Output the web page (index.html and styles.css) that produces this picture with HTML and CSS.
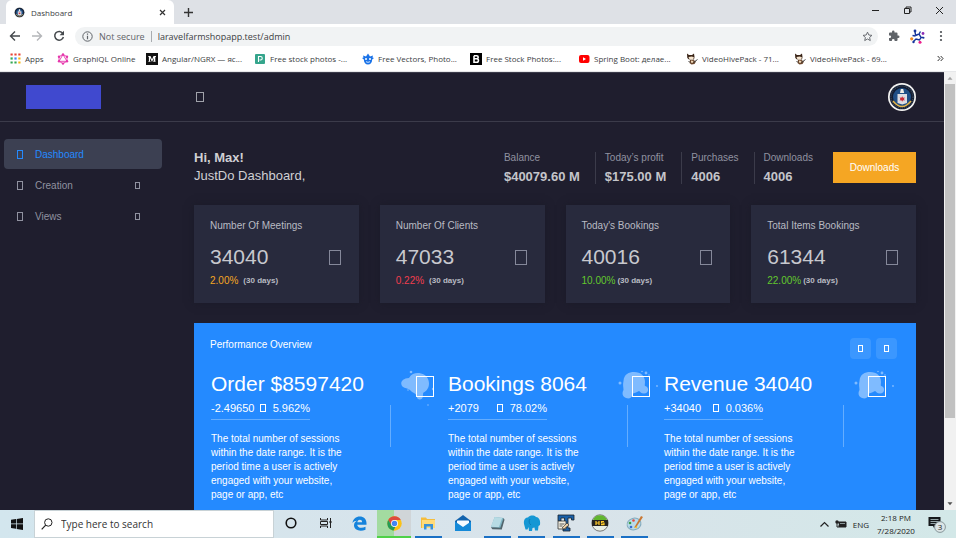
FILE: index.html
```html
<!DOCTYPE html>
<html lang="en">
<head>
<meta charset="utf-8">
<title>Dashboard</title>
<link rel="stylesheet" href="styles.css">
</head>
<body>
<svg class="defs" aria-hidden="true">
  <symbol id="seal" viewBox="0 0 28 28">
    <circle cx="14" cy="14" r="14" fill="#f4f4f2"/>
    <circle cx="14" cy="14" r="12.3" fill="#101c33"/>
    <circle cx="14" cy="14" r="11" fill="none" stroke="#49525c" stroke-width="1.2" stroke-dasharray="1 1"/>
    <circle cx="14" cy="14" r="9" fill="#1f4f86"/>
    <path d="M5 18Q14 29 23 18" fill="none" stroke="#e3b64d" stroke-width="1.6"/>
    <path d="M12 10l.800-4h2.400l1 4z" fill="#f1eee6"/>
    <path d="M9.500 11h9.500v9l-4.700 1.500-4.800-1.500z" fill="#dcdde2"/>
    <path d="M14.200 13.200l.800 1.600 1.800-.400-.800 1.600.800 1.600-1.800-.400-.800 1.600-.800-1.600-1.800.400.800-1.600-.800-1.600 1.800.400z" fill="#c92a36"/>
  </symbol>
  <symbol id="wolf" viewBox="0 0 12 12">
    <path d="M1 .500l2 1.500h3L8 .500 8.500 4 8 6.500H3L1.300 5z" fill="#3a2417"/>
    <path d="M2.500 4L6 3.500 8 4.500 7 6.500H3.500z" fill="#f6e5cf"/>
    <path d="M4 7l3.500 0L10 8.500l-1.500 2.500-3 .500L3.500 10z" fill="#6b452a"/>
    <path d="M5 7.500l2.500.500-1 2-1.500-.500z" fill="#f0d9b8"/>
    <path d="M7.500 9.500l4-3M2.500 8l1.500 1.500" stroke="#444" stroke-width="1"/>
  </symbol>
  <symbol id="splash-a" viewBox="0 0 34 38">
    <path fill="#fff" opacity=".42" d="M9 8C12 3 17 2.500 21 3.500c5 1 8 5 8 10 0 5-3 8-6 9.500.5 1-.200 2-.200 3.500 0 4-6 4-6 0 0-1-.500-2-2.800-3.500C11 22 10 19 7 18.500c-8-1-8-10 2-10.500z"/>
    <g fill="#fff" opacity=".42"><circle cx="11" cy="2" r="1.300"/><circle cx="8" cy="20" r=".8"/><circle cx="33" cy="19" r="1.200"/><circle cx="28" cy="35" r=".8"/></g>
  </symbol>
  <symbol id="splash-b" viewBox="0 0 40 32">
    <path fill="#fff" opacity=".42" d="M5.500 11C6 4 11 2 16 2c7 0 11 4 11 10 0 2-.500 3 0 4 4.500 1 4 7.500-1 7.500-3 0-4-2-5-2.500-2 1-4 2-6 2.500-1 5-4 5.500-7 4.500-4-1.500-4-5.500-2.500-8 0-3-1-5 0-9z"/>
    <g fill="#fff" opacity=".42"><circle cx="2" cy="13" r="1.500"/><circle cx="28" cy="3" r="1.400"/><circle cx="24" cy="1.500" r=".8"/><circle cx="39" cy="16" r=".9"/><circle cx="31" cy="5" r=".8"/></g>
  </symbol>
</svg>

<header class="browser">
  <div class="tabs">
    <div class="tab">
      <svg class="i11" viewBox="0 0 28 28"><use href="#seal"/></svg>
      <span class="tab-title">Dashboard</span>
      <button class="plain" aria-label="Close tab"><svg class="i7" viewBox="0 0 7 7"><path d="M1 1l5 5M6 1L1 6" stroke="#333" stroke-width="1.200"/></svg></button>
    </div>
    <button class="plain new-tab" aria-label="New tab"><svg class="i9" viewBox="0 0 9 9"><path d="M4.500 0v9M0 4.500h9" stroke="#333" stroke-width="1.400"/></svg></button>
    <div class="window-buttons">
      <button class="plain" aria-label="Minimize"><svg class="i9" viewBox="0 0 9 9"><path d="M1 4.500h7" stroke="#222"/></svg></button>
      <button class="plain" aria-label="Restore"><svg class="i9" viewBox="0 0 9 9"><path d="M1.500 2.500h5v5h-5zM3 2.500V1h5v5H6.500" fill="none" stroke="#222"/></svg></button>
      <button class="plain" aria-label="Close"><svg class="i9" viewBox="0 0 9 9"><path d="M1 1l7 7M8 1L1 8" stroke="#222"/></svg></button>
    </div>
  </div>
  <div class="toolbar">
    <button class="plain" aria-label="Back"><svg class="i12" viewBox="0 0 12 12"><path d="M11 6H1.500M6 1.500L1.500 6 6 10.500" fill="none" stroke="#45494d" stroke-width="1.400"/></svg></button>
    <button class="plain" aria-label="Forward"><svg class="i12" viewBox="0 0 12 12"><path d="M1 6h9.500M6 1.500L10.500 6 6 10.500" fill="none" stroke="#b4b6b9" stroke-width="1.400"/></svg></button>
    <button class="plain" aria-label="Reload"><svg class="i12" viewBox="0 0 12 12"><path d="M9.800 3.300A4.400 4.400 0 1 0 10.400 7" fill="none" stroke="#45494d" stroke-width="1.500"/><path d="M11 .800v4.400H6.600z" fill="#45494d"/></svg></button>
    <div class="omnibox">
      <svg class="i11" viewBox="0 0 11 11"><circle cx="5.500" cy="5.500" r="4.700" fill="none" stroke="#5f6368"/><path d="M5.500 4.800v3.400M5.500 2.600v1.200" stroke="#5f6368" stroke-width="1.200"/></svg>
      <label class="secure" for="url">Not secure</label>
      <input id="url" type="text" value="laravelfarmshopapp.test/admin">
      <button class="plain" aria-label="Bookmark"><svg class="i11" viewBox="0 0 24 24"><path d="M12 2.500l2.900 6.300 6.800.700-5.100 4.600 1.500 6.800-6.100-3.500-6.100 3.500 1.500-6.800L2.300 9.500l6.800-.700z" fill="none" stroke="#5f6368" stroke-width="2"/></svg></button>
    </div>
    <button class="plain" aria-label="Extensions"><svg class="i12" viewBox="0 0 24 24"><path d="M20.500 11H19V7a2 2 0 0 0-2-2h-4V3.500a2.500 2.500 0 0 0-5 0V5H4a2 2 0 0 0-2 2v3.800h1.500a2.700 2.700 0 0 1 0 5.400H2V20a2 2 0 0 0 2 2h3.800v-1.500a2.700 2.700 0 0 1 5.400 0V22H17a2 2 0 0 0 2-2v-4h1.500a2.500 2.500 0 0 0 0-5z" fill="#5f6368"/></svg></button>
    <button class="plain" aria-label="Profile"><svg class="i15" viewBox="0 0 15 15"><g fill="none" stroke="#17359c" stroke-width="1.400"><path d="M5 2.500l.500 3.500M2.500 6.500l3 .500M5.500 6.500L9 5l2 3.500-1.500 2.500-3.500-1L3.500 12.500M9 5l1.500-2.500M11 8.500h2"/></g><g fill="#17359c"><circle cx="5" cy="2" r="1.400"/><circle cx="3.500" cy="13" r="1.200"/><circle cx="13.500" cy="8.800" r="1"/></g><circle cx="1.700" cy="9.800" r="1.600" fill="#f08a24"/><circle cx="13" cy="4.500" r="1.400" fill="#8a2db5"/><circle cx="10" cy="13.200" r="1.500" fill="#ec1e8c"/></svg></button>
    <button class="plain" aria-label="Menu"><svg class="i12" viewBox="0 0 12 12"><g fill="#4b4f53"><circle cx="6" cy="2" r="1.100"/><circle cx="6" cy="6" r="1.100"/><circle cx="6" cy="10" r="1.100"/></g></svg></button>
  </div>
  <nav class="bookmarks">
    <a href="#" class="bm bm-apps"><svg class="i11" viewBox="0 0 11 11"><path d="M.500 1.500h2.200M4.400 1.500h2.200M8.300 1.500h2.200" stroke="#e94335" stroke-width="2.200"/><path d="M.500 5.500h2.200" stroke="#34a853" stroke-width="2.200"/><path d="M4.400 5.500h2.200" stroke="#4285f4" stroke-width="2.200"/><path d="M8.300 5.500h2.200M8.300 9.500h2.200" stroke="#f6b50c" stroke-width="2.200"/><path d="M.500 9.500h2.200M4.400 9.500h2.200" stroke="#34a853" stroke-width="2.200"/></svg>Apps</a>
    <a href="#" class="bm bm-graph"><svg class="i12" viewBox="0 0 12 12"><path d="M6 1.500l4 2.200v4.600L6 10.500 2 8.300V3.700zM6 1.500L2 8.300h8z" fill="none" stroke="#e535ab" stroke-width=".9"/><g fill="#e535ab"><circle cx="6" cy="1.400" r="1.200"/><circle cx="10" cy="3.700" r="1.200"/><circle cx="10" cy="8.300" r="1.200"/><circle cx="6" cy="10.600" r="1.200"/><circle cx="2" cy="8.300" r="1.200"/><circle cx="2" cy="3.700" r="1.200"/></g></svg>GraphiQL Online</a>
    <a href="#" class="bm"><svg class="i12" viewBox="0 0 12 12"><path d="M0 0h12v12H0z" fill="#111"/><path d="M2 3h2.500L6 6.500 7.500 3H10v.700l-.700.500v4l.700.600H6.900l.800-.700V4.900L6 9 4 4.900v3l.900.900H2l.900-.900V4.300z" fill="#fff"/></svg>Angular/NGRX — яс...</a>
    <a href="#" class="bm"><svg class="i12" viewBox="0 0 12 12"><rect x="1" y="1" width="10" height="10" rx="1" fill="#35a58c"/><path d="M4.500 9V3.500h2a1.700 1.700 0 0 1 0 3.500h-1" fill="none" stroke="#fff" stroke-width="1.100"/></svg>Free stock photos -...</a>
    <a href="#" class="bm"><svg class="i12" viewBox="0 0 12 12"><path d="M1 2.500l3 1L6 .500l2 3 3-1-.500 2 1.500.500-1.800 1.500C10 10 8.500 11.500 6 11.500S2 10 1.800 6.500L0 5l1.500-.500z" fill="#1a73e8"/><circle cx="4" cy="6" r="1" fill="#fff"/><circle cx="8" cy="6" r="1" fill="#fff"/><path d="M4 8.700q2 1.300 4 0" stroke="#fff" fill="none" stroke-width=".8"/></svg>Free Vectors, Photo...</a>
    <a href="#" class="bm"><svg class="i12" viewBox="0 0 12 12"><path d="M0 0h12v12H0z" fill="#000"/><path d="M4 2.700h2.700a1.500 1.500 0 0 1 0 3H4m2.700 0a1.700 1.700 0 0 1 0 3.500H4V2.700" fill="none" stroke="#fff" stroke-width="1.600"/></svg>Free Stock Photos:...</a>
    <a href="#" class="bm"><svg class="i12" viewBox="0 0 12 12"><rect x="1" y="2" width="10.500" height="8" rx="2" fill="#f00"/><path d="M5 4.300v3.400L8 6z" fill="#fff"/></svg>Spring Boot: делае...</a>
    <a href="#" class="bm"><svg class="i12" viewBox="0 0 12 12"><use href="#wolf"/></svg>VideoHivePack - 71...</a>
    <a href="#" class="bm"><svg class="i12" viewBox="0 0 12 12"><use href="#wolf"/></svg>VideoHivePack - 69...</a>
    <button class="plain more" aria-label="More bookmarks"><svg class="i7" viewBox="0 0 7 7"><path d="M.700 1l2.300 2.500L.700 6M3.700 1L6 3.500 3.700 6" fill="none" stroke="#333"/></svg></button>
  </nav>
</header>

<div class="viewport">
  <div class="app">
    <header class="app-header">
      <a href="#" class="brand" aria-label="Home"></a>
      <button class="plain toggle" aria-label="Toggle sidebar"><span class="box box-m"></span></button>
      <svg class="avatar" viewBox="0 0 28 28"><use href="#seal"/></svg>
    </header>
    <div class="app-body">
      <nav class="sidebar">
        <a href="#" class="side-link active"><span class="box box-s"></span>Dashboard</a>
        <a href="#" class="side-link"><span class="box box-s"></span>Creation<span class="box box-xs caret"></span></a>
        <a href="#" class="side-link"><span class="box box-s"></span>Views<span class="box box-xs caret"></span></a>
      </nav>
      <main class="main">
        <section class="welcome">
          <div class="hello"><h1>Hi, Max!</h1><p>JustDo Dashboard,</p></div>
          <dl class="stats">
            <div><dt>Balance</dt><dd>$40079.60 M</dd></div>
            <div><dt>Today’s profit</dt><dd>$175.00 M</dd></div>
            <div><dt>Purchases</dt><dd>4006</dd></div>
            <div><dt>Downloads</dt><dd>4006</dd></div>
          </dl>
          <button class="download">Downloads</button>
        </section>
        <section class="cards">
          <article class="card"><h2>Number Of Meetings</h2><div class="figure">34040<span class="box box-l"></span></div><p><span class="pct orange">2.00%</span><b>(30 days)</b></p></article>
          <article class="card"><h2>Number Of Clients</h2><div class="figure">47033<span class="box box-l"></span></div><p><span class="pct red">0.22%</span><b>(30 days)</b></p></article>
          <article class="card"><h2>Today's Bookings</h2><div class="figure">40016<span class="box box-l"></span></div><p><span class="pct green">10.00%</span><b>(30 days)</b></p></article>
          <article class="card"><h2>Total Items Bookings</h2><div class="figure">61344<span class="box box-l"></span></div><p><span class="pct green">22.00%</span><b>(30 days)</b></p></article>
        </section>
        <section class="overview">
          <div class="overview-head">
            <h2>Performance Overview</h2>
            <button class="nav-btn" aria-label="Previous"><span class="box box-xs"></span></button>
            <button class="nav-btn" aria-label="Next"><span class="box box-xs"></span></button>
          </div>
          <div class="slides">
            <article class="slide">
              <div class="slide-head"><h3>Order $8597420</h3><span class="badge"><svg class="splash-a" viewBox="0 0 34 38"><use href="#splash-a"/></svg><span class="box box-xl"></span></span></div>
              <div class="slide-body">
                <div class="detail"><div class="change"><span>-2.49650</span><span class="rate"><span class="box box-t"></span>5.962%</span></div>
                <p>The total number of sessions within the date range. It is the period time a user is actively engaged with your website, page or app, etc</p></div>
                <span class="divider"></span>
              </div>
            </article>
            <article class="slide">
              <div class="slide-head"><h3>Bookings 8064</h3><span class="badge"><svg class="splash-b" viewBox="0 0 40 32"><use href="#splash-b"/></svg><span class="box box-xl"></span></span></div>
              <div class="slide-body">
                <div class="detail"><div class="change"><span>+2079</span><span class="rate"><span class="box box-t"></span>78.02%</span></div>
                <p>The total number of sessions within the date range. It is the period time a user is actively engaged with your website, page or app, etc</p></div>
                <span class="divider"></span>
              </div>
            </article>
            <article class="slide">
              <div class="slide-head"><h3>Revenue 34040</h3><span class="badge"><svg class="splash-b" viewBox="0 0 40 32"><use href="#splash-b"/></svg><span class="box box-xl"></span></span></div>
              <div class="slide-body">
                <div class="detail"><div class="change"><span>+34040</span><span class="rate"><span class="box box-t"></span>0.036%</span></div>
                <p>The total number of sessions within the date range. It is the period time a user is actively engaged with your website, page or app, etc</p></div>
                <span class="divider"></span>
              </div>
            </article>
          </div>
        </section>
      </main>
    </div>
  </div>
  <div class="scrollbar">
    <svg class="arrow" viewBox="0 0 12 12"><path d="M3 8L6 4.500 9 8z" fill="#a3a3a3"/></svg>
    <span class="thumb"></span><span class="rest"></span>
    <svg class="arrow" viewBox="0 0 12 12"><path d="M3 4h6L6 7.500z" fill="#505050"/></svg>
  </div>
</div>

<footer class="taskbar">
  <button class="start" aria-label="Start"><svg class="i12" viewBox="0 0 12 12"><path d="M0 1.800l5-.700v4.500H0zM5.700 1L12 0v5.600H5.700zM0 6.300h5v4.500l-5-.700zM5.700 6.300H12V12l-6.300-1z" fill="#111"/></svg></button>
  <div class="search">
    <svg class="i12" viewBox="0 0 12 12"><circle cx="7.300" cy="4.500" r="3.700" fill="none" stroke="#222"/><path d="M4.700 7.200L.700 11.300" stroke="#222" stroke-width="1.200"/></svg>
    <input type="text" aria-label="Search" placeholder="Type here to search">
  </div>
  <div class="tasks">
    <button class="task" aria-label="Cortana"><svg class="i12" viewBox="0 0 12 12"><circle cx="6" cy="6" r="4.800" fill="none" stroke="#111" stroke-width="1.600"/></svg></button>
    <button class="task" aria-label="Task view"><svg class="i12" viewBox="0 0 12 12"><path d="M.500 1v2h7V1M.500 11V9h7v2M.500 4.500h7v3h-7zM10.500 1v10" fill="none" stroke="#222"/><path d="M9.500 4h2v2h-2z" fill="#222"/></svg></button>
    <button class="task" aria-label="Edge"><svg class="i15" viewBox="0 0 15 15"><path d="M.500 7C1 3 4 .500 7.700.500c4 0 6.800 2.700 6.800 6.800v1.500H5.200c.300 3.500 5 3.800 8.300 1.900v3C8 16 2 14.200 2 9.300 2 7 3.300 5.500 5 4.700 3 4.800 1.500 5.500.500 7zm4.800-.700h4.800c0-3.300-4.300-3.200-4.800 0z" fill="#1583dc" fill-rule="evenodd"/></svg></button>
    <button class="task current" aria-label="Chrome"><svg class="i15" viewBox="0 0 16 16"><circle cx="8" cy="8" r="7.700" fill="#fbc116"/><path d="M1.300 4.200A7.700 7.700 0 0 1 14.700 4.300H8L4.800 10z" fill="#dd4b3e"/><path d="M1.300 4.200L5 10l4 1.500-2.200 4.100A7.700 7.700 0 0 1 1.300 4.200z" fill="#249b57"/><circle cx="8" cy="8" r="3.700" fill="#fff"/><circle cx="8" cy="8" r="2.900" fill="#4285f4"/></svg></button>
    <button class="task open" aria-label="File Explorer"><svg class="i15" viewBox="0 0 15 15"><path d="M0 1.500h5l1 1.500h8v9H0z" fill="#f5bd3d"/><path d="M1 4h13v8H1z" fill="#ffdb7a"/><path d="M3 13.500V8h9v5.500H9.500v-3h-4v3z" fill="#3a91d7"/></svg></button>
    <button class="task" aria-label="Mail"><svg class="i18" viewBox="0 0 18 18"><path d="M1 7l8-6 8 6v10H1z" fill="#1263ad"/><path d="M3 7h12v4l-6 4-6-4z" fill="#f6fbff"/><path d="M1 7.500l8 5.500 8-5.500V17H1z" fill="#1489d8"/><path d="M3 6.500h12L9 11.500z" fill="#f6fbff"/></svg></button>
    <button class="task open" aria-label="Notepad"><svg class="i15" viewBox="0 0 16 16"><path d="M5 1l9.500 1-2 12L1 12z" fill="#7fb5c4"/><path d="M5 1l8 1-3.500 10L1 11.500z" fill="#b7dbe4"/><path d="M14.500 2l1 2-3 10.500-10-.500-1.500-2 10 .500z" fill="#52656d"/></svg></button>
    <button class="task open" aria-label="pgAdmin"><svg class="i18" viewBox="0 0 18 18"><path d="M1 10C.500 6 2 3.500 5 3.500 7 1 11 1 13 3c4 .500 4.500 5 4 8l-1.500 1L15 16.500h-3l-.500-3-2 .500-.500 3H6l-.500-4-1 2.500H2.500z" fill="#1597d4"/><path d="M7 5c-1.500 2-1 4.500 1 6" fill="none" stroke="#0873ad" stroke-width=".8"/></svg></button>
    <button class="task open" aria-label="Text tool"><svg class="i18" viewBox="0 0 18 18"><path d="M1 1h16v5h-2.500V4H11v10h2v3H6v-3h1.500V4H4v3H1z" fill="#1960a9" stroke="#17222c" stroke-width=".8"/><path d="M1 7h8v8H1z" fill="#f1ede0" stroke="#333" stroke-width=".8"/><path d="M2.500 10h5M2.500 12h3" stroke="#333" stroke-width=".8"/><path d="M5 14l5-5 2 2-5 4z" fill="#eccfa5" stroke="#222" stroke-width=".6"/></svg></button>
    <button class="task open" aria-label="HeidiSQL"><svg class="i18" viewBox="0 0 18 18"><circle cx="9" cy="9" r="8.200" fill="#e8eee5" stroke="#777"/><path d="M2 6a7.500 7.500 0 0 1 14 0z" fill="#61b62f"/><path d="M1 6h16v6H1z" fill="#252420"/><path d="M5 7v4M8 7v4M5 9h3M13 7.500h-2.500V9H13v1.600h-3" fill="none" stroke="#ffc928" stroke-width="1.200"/></svg></button>
    <button class="task open" aria-label="Paint"><svg class="i18" viewBox="0 0 18 18"><ellipse cx="8" cy="10" rx="7" ry="5.800" fill="#b8dbe9" stroke="#83aabd" transform="rotate(-15 8 10)"/><circle cx="4" cy="9" r="1.300" fill="#3b9e45"/><circle cx="7.500" cy="6.500" r="1.300" fill="#e34a3f"/><circle cx="5" cy="13" r="1.300" fill="#356bd0"/><circle cx="10" cy="13" r="1.300" fill="#f1c33a"/><path d="M8 14l7-12 2 1-6 9z" fill="#c97834"/></svg></button>
  </div>
  <div class="tray">
    <svg class="i9" viewBox="0 0 9 9"><path d="M.500 6.500l4-4 4 4" fill="none" stroke="#222" stroke-width="1.200"/></svg>
    <svg class="i12" viewBox="0 0 12 12"><path d="M3 4h8v5H4V7" fill="#222" stroke="#222"/><path d="M5 5.500h5" stroke="#8a9799"/><circle cx="2" cy="4" r="1.700" fill="#222"/><path d="M2 5v4h2" fill="none" stroke="#222"/></svg>
    <span class="lang">ENG</span>
    <span class="clock">2:18 PM<br>7/28/2020</span>
    <svg class="i18" viewBox="0 0 18 18"><path d="M.500 2h12v9H8l-2 2-1-2H.500z" fill="#16191b"/><path d="M2.500 4.500h8M2.500 6.500h8M2.500 8.500h5" stroke="#b5c7c9" stroke-width=".8"/><circle cx="12" cy="12" r="5.400" fill="#dce5e6" stroke="#87969a"/><text x="12" y="15" class="count">3</text></svg>
  </div>
</footer>
</body>
</html>
```

FILE: styles.css
```css
* { box-sizing: border-box; }
body {
  margin: 0; height: 100vh; display: flex; flex-direction: column; overflow: hidden;
  font-family: "Liberation Sans", sans-serif; font-size: 10px; color: #b9bbc3; background: #1f1e2e;
}
h1, h2, h3, p, dl, dd { margin: 0; font-weight: normal; }
a { color: inherit; text-decoration: none; }
button, input { font: inherit; color: inherit; border: 0; padding: 0; margin: 0; background: none; }
svg { display: block; flex: none; }
.defs { width: 0; height: 0; position: absolute; }
.plain { display: flex; align-items: center; justify-content: center; }
.i7 { width: 7px; height: 7px; }
.i9 { width: 9px; height: 9px; }
.i11 { width: 11px; height: 11px; }
.i12 { width: 12px; height: 12px; }
.i15 { width: 15px; height: 15px; }
.i18 { width: 18px; height: 18px; }

/* Browser frame */
.browser, .taskbar { font-family: "Open Sans", sans-serif; flex: none; }
.browser { font-size: 8px; color: #3c4043; background: #fff; }
.tabs { height: 24px; display: flex; align-items: center; background: #dee1e6; padding-left: 6px; }
.tab { align-self: stretch; width: 168px; display: flex; align-items: center; gap: 6px; padding: 0 8px; background: #fff; border-radius: 6px 6px 0 0; }
.tab-title { flex: 1; }
.new-tab { margin-left: 10px; }
.window-buttons { margin-left: auto; display: flex; gap: 23px; padding: 0 12px 4px 0; }
.toolbar { height: 24px; display: flex; align-items: center; gap: 10px; padding: 0 9px; }
.omnibox { flex: 1; height: 19px; display: flex; align-items: center; gap: 6px; padding: 0 5px 0 7px; border-radius: 10px; background: #f1f3f4; font-size: 9px; }
.secure { color: #5f6368; padding-right: 6px; border-right: 1px solid #a9acb0; line-height: 11px; }
.omnibox input { flex: 1; min-width: 0; }
.bookmarks { height: 24px; display: flex; align-items: center; padding: 0 12px 2px 10px; border-bottom: 1px solid #e6e7e9; }
.bm { flex: 0 0 108px; display: flex; align-items: center; gap: 4px; white-space: nowrap; }
.bm-apps { flex-basis: 47px; }
.bm-graph { flex-basis: 89px; }
.more { margin-left: auto; }

/* Page viewport */
.viewport { flex: 1; min-height: 0; display: flex; }
.app { flex: 1; min-width: 0; overflow: hidden; background: #1f1e2e; }
.scrollbar { flex: 0 0 12px; display: flex; flex-direction: column; padding: 0 1px; background: #f1f1f1; }
.arrow { width: 10px; height: 12px; }
.thumb { flex: 334; background: #c1c1c1; }
.rest { flex: 80; }
.app-header { height: 50px; display: flex; align-items: center; padding: 0 28px 0 26px; border-bottom: 1px solid #3b3b4a; border-top: 1px solid #3b3b4a; }
.brand { width: 75px; height: 24px; background: #4049cf; }
.toggle { margin-left: 95px; }
.avatar { width: 28px; height: 28px; margin-left: auto; }
.app-body { display: flex; }

.box { display: inline-block; flex: none; border: 1px solid currentColor; }
.box-t { width: 6px; height: 8px; }
.box-xs { width: 5px; height: 7px; }
.box-s { width: 6px; height: 9px; }
.box-m { width: 8px; height: 10px; color: #a0a2aa; }
.box-l { width: 12px; height: 15px; color: #85889a; }
.box-xl { width: 18px; height: 21px; }

.sidebar { flex: 0 0 166px; padding: 17px 4px; display: flex; flex-direction: column; gap: 1px; }
.side-link { height: 30px; display: flex; align-items: center; gap: 12px; padding: 0 22px 0 13px; border-radius: 4px; color: #9092a0; }
.active { color: #248aff; background: #3c4052; }
.caret { margin-left: auto; }

.main { flex: 1; min-width: 0; padding: 25px 28px 0; }
.welcome { display: flex; align-items: center; height: 40px; }
.hello { font-size: 13px; line-height: 18px; color: #cfd0d4; }
.hello h1 { font-size: 13px; font-weight: bold; }
.stats { display: flex; margin: 2px 5px 0 auto; }
.stats div { padding: 0 15px 0 9px; border-left: 1px solid #3b3b4a; }
.stats div:first-child { border-left: 0; }
.stats dt { line-height: 12px; color: #9092a0; }
.stats dd { margin-top: 6px; font-size: 13px; line-height: 14px; font-weight: bold; color: #c4c5ca; }
.download { width: 83px; height: 31px; background: #f5a623; color: #fff; }

.cards { display: grid; grid-template-columns: repeat(4, 1fr); gap: 21px; margin-top: 18px; }
.card { background: #282a3d; padding: 14px 18px 14px 16px; box-shadow: 0 0 8px #1b1a28; }
.card h2 { font-size: 10px; line-height: 14px; }
.figure { display: flex; align-items: center; justify-content: space-between; margin-top: 11px; font-size: 21px; line-height: 26px; color: #c7c8ce; }
.card p { display: flex; align-items: center; gap: 5px; margin: 4px 0 1px; line-height: 14px; }
.card b { font-size: 8px; }
.card .green { margin-right: -3px; }
.orange { color: #f5a623; }
.red { color: #f03e4e; }
.green { color: #63c82d; }

.overview { margin-top: 20px; padding: 15px 16px 20px; background: #248aff; color: #fff; }
.overview-head { display: flex; gap: 5px; padding-right: 3px; }
.overview-head h2 { flex: 1; font-size: 10px; line-height: 14px; }
.nav-btn { width: 21px; height: 21px; border-radius: 4px; background: #3b97ff; }
.slides { display: grid; grid-template-columns: 237fr 216fr 236fr; margin-top: 12px; padding-left: 1px; }
.slide-head { display: flex; justify-content: space-between; align-items: center; height: 26px; padding-right: 14px; }
.slide-head h3 { font-size: 21px; line-height: 26px; }
.badge { position: relative; }
.badge .box { display: block; margin-top: 4px; }
.splash-a, .splash-b { position: absolute; top: -2px; right: 0; }
.splash-a { width: 34px; height: 38px; }
.splash-b { width: 40px; height: 32px; right: -8px; }
.slide-body { display: flex; }
.detail { flex: 0 0 179px; }
.change { width: 99px; display: flex; justify-content: space-between; font-size: 11px; line-height: 14px; margin-top: 4px; padding-bottom: 4px; border-bottom: 1px solid #64adff; }
.rate { display: flex; align-items: center; gap: 7px; }
.detail p { width: 132px; line-height: 14px; margin-top: 12px; }
.divider { width: 1px; height: 42px; margin-top: 8px; background: #64adff; }

/* Taskbar */
.taskbar { height: 28px; display: flex; background: linear-gradient(90deg, #d3e6ee, #d9e3ea 60%, #d3e8e8); color: #222; }
.start { width: 34px; display: grid; place-items: center; }
.search { flex: 0 1 240px; display: flex; align-items: center; gap: 8px; padding: 0 6px; background: #fff; border: 1px solid #c8d2d6; }
.search input { flex: 1; min-width: 0; font-size: 10px; }
.search input::placeholder { color: #333; opacity: 1; }
.tasks { flex: 0 1 378px; display: flex; }
.task { flex: 1; display: grid; place-items: center; border-bottom: 2px solid transparent; }
.open { background: linear-gradient(#1a70c5, #1a70c5) bottom / 27px 2px no-repeat border-box; }
.current { border-bottom-color: #4fd148; background: linear-gradient(90deg, #a3dba0 50%, #d0d5d8 50%); }
.tray { margin-left: auto; display: flex; align-items: center; gap: 6px; padding-right: 10px; font-size: 8px; }
.clock { text-align: center; line-height: 13px; width: 42px; margin-right: 5px; }
.count { font-family: "Open Sans", sans-serif; font-size: 8px; text-anchor: middle; fill: #222; }
```
